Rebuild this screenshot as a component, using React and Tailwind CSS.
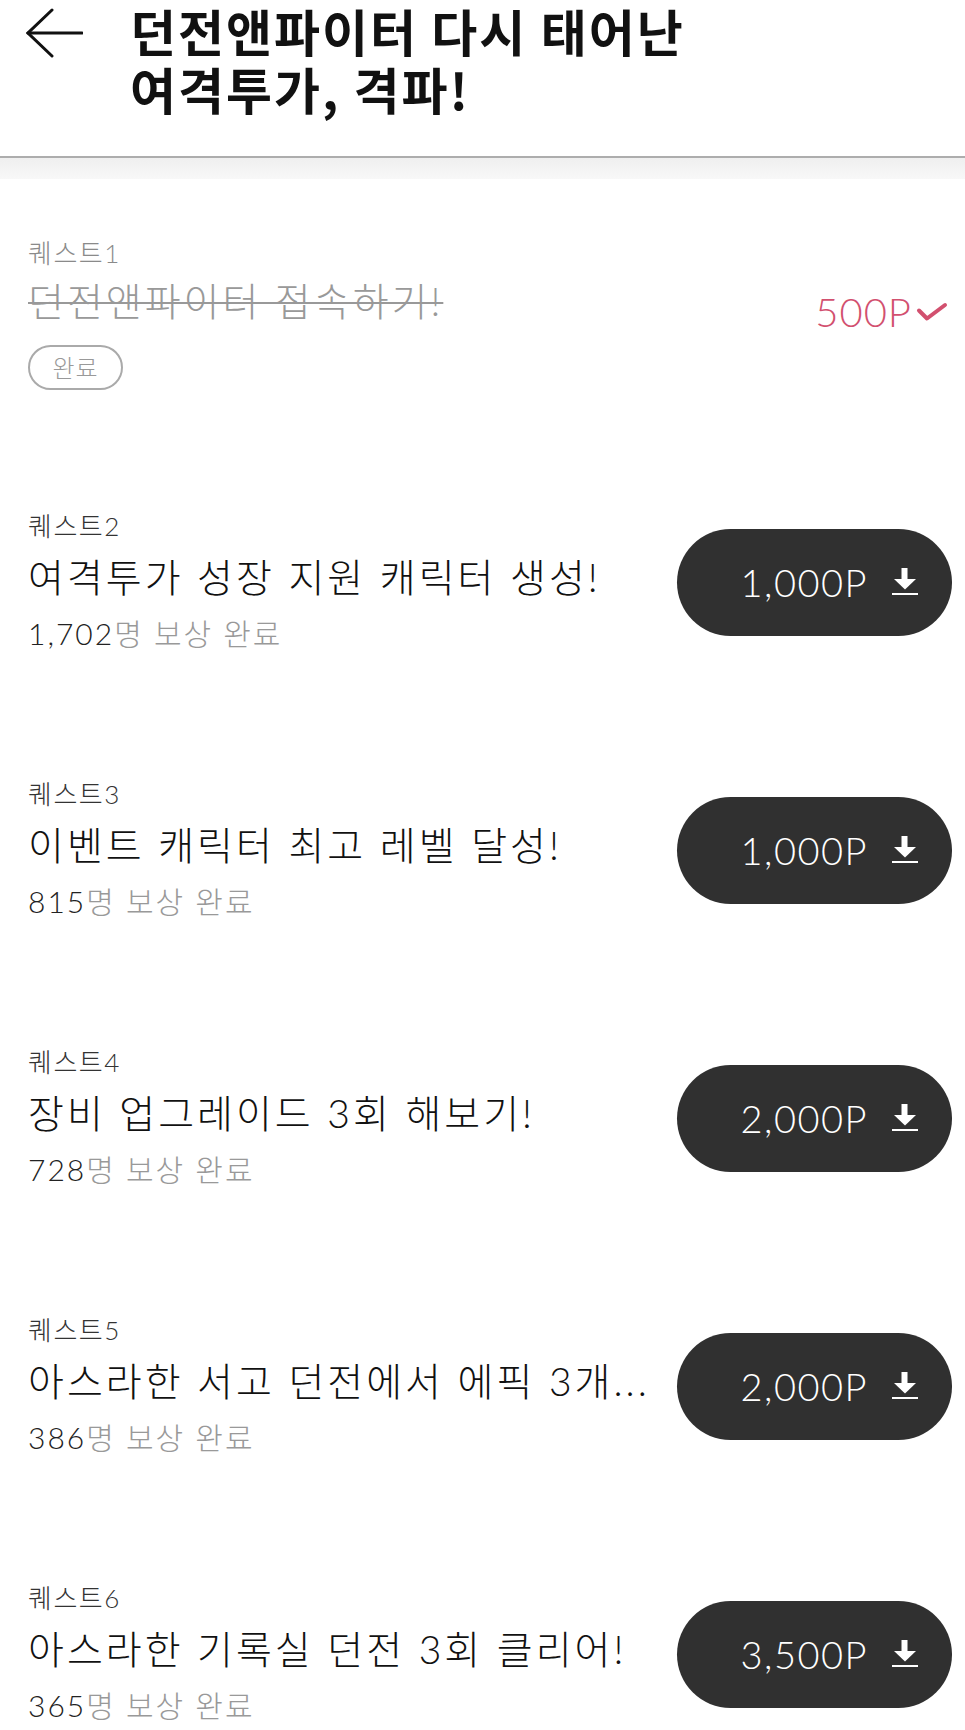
import React from 'react'

const quests = [
  { no: 2, title: '여격투가 성장 지원 캐릭터 생성!', count: '1,702', point: '1,000P' },
  { no: 3, title: '이벤트 캐릭터 최고 레벨 달성!', count: '815', point: '1,000P' },
  { no: 4, title: '장비 업그레이드 3회 해보기!', count: '728', point: '2,000P' },
  { no: 5, title: '아스라한 서고 던전에서 에픽 3개...', count: '386', point: '2,000P' },
  { no: 6, title: '아스라한 기록실 던전 3회 클리어!', count: '365', point: '3,500P' },
]

function BackArrow() {
  return (
    <svg width="57" height="50" viewBox="0 0 57 50" fill="none" stroke="#111" strokeWidth="3" strokeLinecap="round">
      <path d="M2 25H56" />
      <path d="M26 2L2 25L26 48" />
    </svg>
  )
}

function DownloadIcon() {
  return (
    <svg width="26" height="28" viewBox="0 0 26 28" fill="#fff">
      <rect x="9.5" y="0" width="6" height="12" />
      <path d="M2 11H24L13 21.5Z" />
      <rect x="0" y="25" width="26" height="2" />
    </svg>
  )
}

function CheckIcon() {
  return (
    <svg width="32" height="20" viewBox="0 0 32 20" fill="none" stroke="#d2506f" strokeWidth="4" strokeLinecap="round" strokeLinejoin="round">
      <path d="M3 8.5L11 16.5L29 3" />
    </svg>
  )
}

function QuestRow({ quest }) {
  return (
    <div className="flex items-center justify-between gap-[22px]">
      <div className="flex-1 min-w-0">
        <div className="text-[26px] leading-[40px] font-light text-[#333] tracking-[1.5px]">퀘스트{quest.no}</div>
        <div className="text-[39px] leading-[62px] font-light text-[#111] tracking-[3px] truncate">{quest.title}</div>
        <div className="text-[30px] leading-[50px] font-light text-[#999] tracking-[2px]">
          <span className="text-[#222]">{quest.count}</span>명 보상 완료
        </div>
      </div>
      <button className="shrink-0 w-[275px] h-[107px] rounded-full bg-[#303030] flex items-center justify-end gap-[24px] pr-[34px]">
        <span className="text-[38px] font-light text-white tracking-[1.5px]">{quest.point}</span>
        <DownloadIcon />
      </button>
    </div>
  )
}

export default function App() {
  return (
    <div className="w-[965px] h-[1730px] overflow-hidden bg-white" style={{ fontFamily: "Lato, 'Noto Sans CJK KR', sans-serif" }}>
      <header className="h-[158px] border-b-2 border-[#adadad] flex items-start pl-[26px]">
        <div className="mt-[8px]">
          <BackArrow />
        </div>
        <h1
          className="ml-[47px] pt-[1px] text-[50px] leading-[58px] font-bold text-[#111] tracking-[2px]"
          style={{ fontFamily: "'Noto Sans CJK KR', sans-serif" }}
        >
          던전앤파이터 다시 태어난
          <br />
          여격투가, 격파!
        </h1>
      </header>
      <div className="h-[21px] bg-gradient-to-b from-[#efefef] to-[#f8f8f8]" />

      <div className="pt-[54px] pl-[28px] pr-[13px] flex flex-col gap-[116px]">
        <div className="flex items-center justify-between">
          <div>
            <div className="text-[26px] leading-[40px] font-light text-[#8a8a8a] tracking-[1.5px]">퀘스트1</div>
            <div className="text-[39px] leading-[56px] font-light text-[#999] tracking-[3px] line-through decoration-2">
              던전앤파이터 접속하기!
            </div>
            <div className="mt-[16px] w-[95px] h-[45px] rounded-full border-2 border-[#aaa] flex items-center justify-center text-[24px] font-light text-[#999] tracking-[1px]">
              완료
            </div>
          </div>
          <div className="flex items-center gap-[4px] pr-[4px] text-[40px] font-light text-[#d2506f] tracking-[1px]">
            500P
            <CheckIcon />
          </div>
        </div>

        {quests.map((q) => (
          <QuestRow key={q.no} quest={q} />
        ))}
      </div>
    </div>
  )
}
